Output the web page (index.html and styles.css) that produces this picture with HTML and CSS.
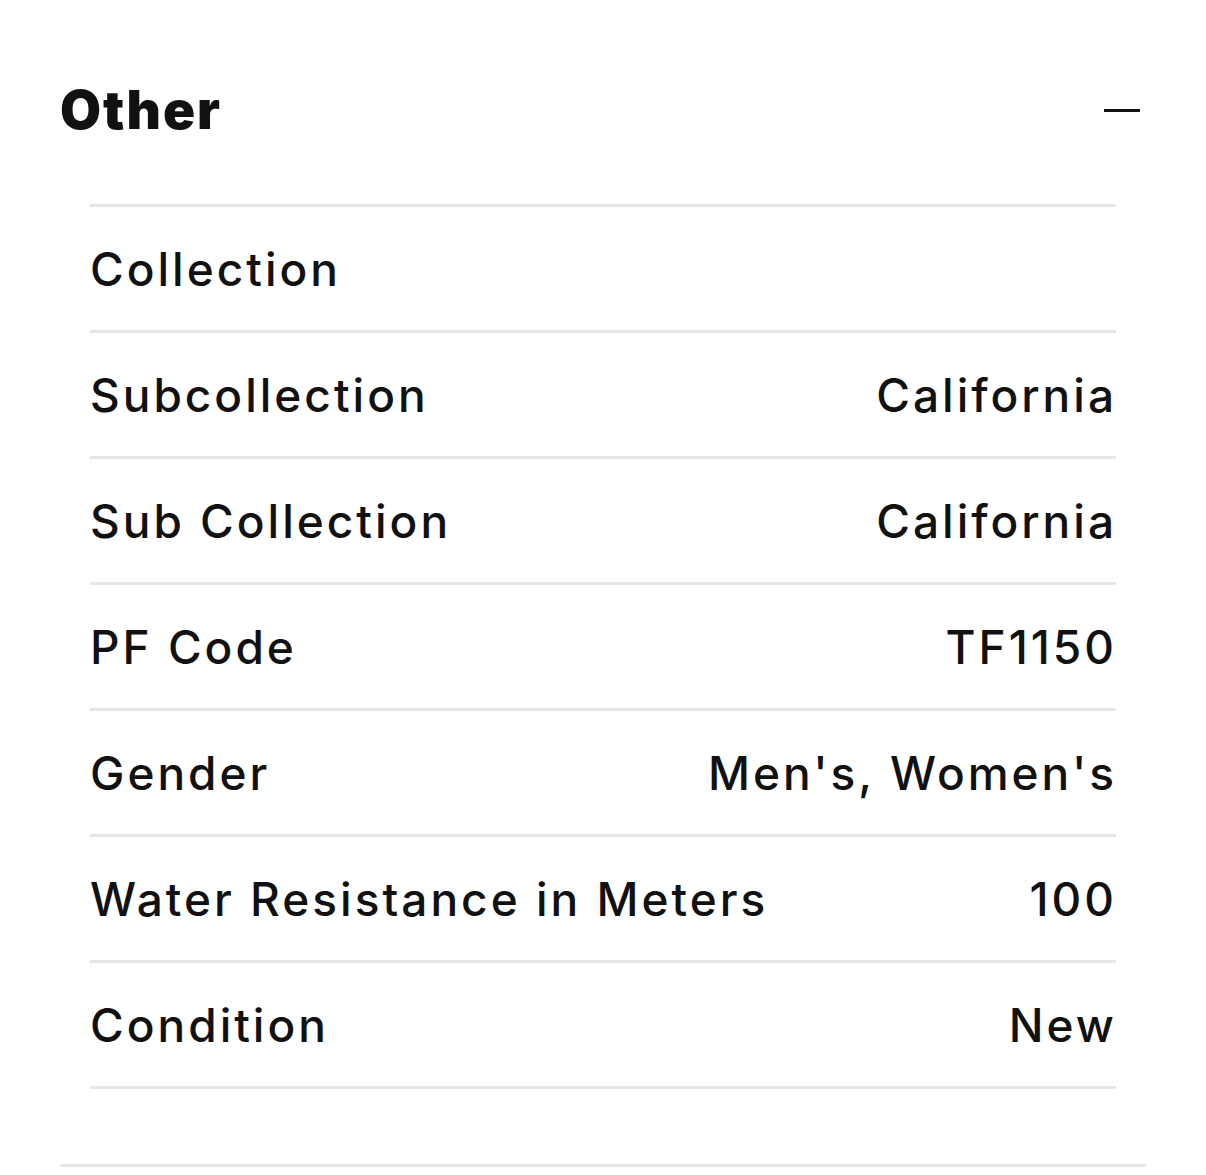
FILE: index.html
```html
<!DOCTYPE html>
<html>
<head>
<meta charset="utf-8">
<link rel="stylesheet" href="styles.css">
</head>
<body>
<section class="panel">
  <div class="head">
    <h2 class="title">Other</h2>
    <span class="toggle" aria-label="collapse"></span>
  </div>
  <div class="list">
    <div class="row"><span class="label">Collection</span><span class="value"></span></div>
    <div class="row"><span class="label">Subcollection</span><span class="value">California</span></div>
    <div class="row"><span class="label">Sub Collection</span><span class="value">California</span></div>
    <div class="row"><span class="label">PF Code</span><span class="value">TF1150</span></div>
    <div class="row"><span class="label">Gender</span><span class="value">Men's, Women's</span></div>
    <div class="row"><span class="label">Water Resistance in Meters</span><span class="value">100</span></div>
    <div class="row"><span class="label">Condition</span><span class="value">New</span></div>
  </div>
</section>
</body>
</html>
```
FILE: styles.css
```css
html, body {
  margin: 0;
  background: #fff;
}
body {
  font-family: Inter, "Open Sans", sans-serif;
  color: #111;
}
.panel {
  margin: 0 60px;
  padding-top: 60px;
  padding-bottom: 75px;
  border-bottom: 3px solid #e6e6e6;
}
.head {
  height: 100px;
  display: flex;
  align-items: center;
  justify-content: space-between;
}
.title {
  margin: 0;
  font-size: 53px;
  font-weight: 900;
  letter-spacing: 2px;
  padding-left: 0;
}
.toggle {
  width: 36px;
  height: 3px;
  background: #111;
  margin-right: 6px;
}
.list {
  margin: 44px 30px 0;
  border-top: 3px solid #e6e6e6;
}
.row {
  height: 123px;
  border-bottom: 3px solid #e6e6e6;
  display: flex;
  align-items: center;
  justify-content: space-between;
  font-size: 46px;
  font-weight: 500;
  letter-spacing: 3px;
}
.label {
  padding-left: 0;
}
.value {
  margin-right: -1px;
}
```
